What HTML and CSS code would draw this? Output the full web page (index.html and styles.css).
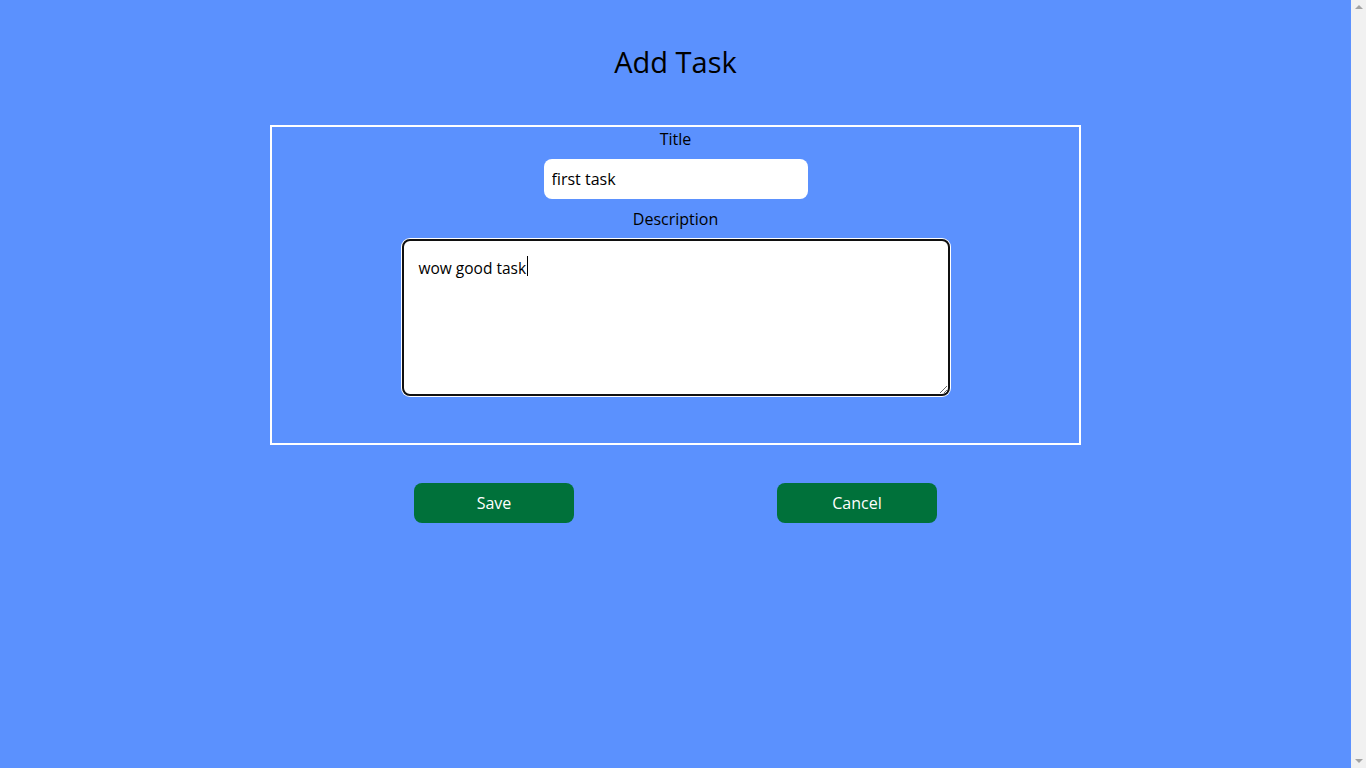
FILE: index.html
```html
<!DOCTYPE html>
<html lang="en">
<head>
<meta charset="utf-8">
<title>Add Task</title>
<link rel="stylesheet" href="styles.css">
</head>
<body>
<main class="page">
  <h1 class="heading">Add Task</h1>
  <form class="task-form">
    <div class="fields">
      <label class="field-label" for="title">Title</label>
      <input class="title-input" id="title" type="text" value="first task">
      <label class="field-label desc-label" for="desc">Description</label>
      <div class="desc-wrap">
        <textarea class="desc-input" id="desc">wow good task</textarea>
        <span class="caret"></span>
      </div>
    </div>
    <div class="actions">
      <button class="btn" type="button">Save</button>
      <button class="btn" type="button">Cancel</button>
    </div>
  </form>
</main>
<div class="scrollbar">
  <span class="arrow arrow-up"></span>
  <span class="arrow arrow-down"></span>
</div>
</body>
</html>
```

FILE: styles.css
```css
html {
  background: #5b91fe;
}
body {
  margin: 0;
  background: #5b91fe;
  font-family: "Open Sans", "Noto Sans", sans-serif;
  color: #000;
  display: flex;
  min-height: 100vh;
}
.page {
  flex: 1;
  display: flex;
  flex-direction: column;
  align-items: center;
}
.scrollbar {
  width: 15px;
  height: 100vh;
  background: #f1f1f1;
  display: flex;
  flex-direction: column;
  justify-content: space-between;
  align-items: center;
  box-sizing: border-box;
  padding: 5px 0 5px;
}
.arrow {
  width: 0;
  height: 0;
  border-left: 4px solid transparent;
  border-right: 4px solid transparent;
}
.arrow-up {
  border-bottom: 4px solid #a3a3a3;
}
.arrow-down {
  border-top: 4px solid #a3a3a3;
}
.heading {
  margin: 43px 0 0;
  font-size: 29px;
  font-weight: 400;
  line-height: 38px;
  height: 38px;
}
.task-form {
  width: 60%;
  display: flex;
  flex-direction: column;
  align-items: center;
  margin-top: 44px;
}
.fields {
  box-sizing: border-box;
  width: 100%;
  height: 320px;
  border: 2px solid #fff;
  display: flex;
  flex-direction: column;
  align-items: center;
}
.field-label {
  font-size: 16px;
  line-height: 24px;
  height: 24px;
}
.title-input {
  margin-top: 8px;
  box-sizing: border-box;
  width: 264px;
  height: 40px;
  border: none;
  border-radius: 8px;
  padding: 0 8px;
  font-family: inherit;
  font-size: 16px;
  color: #000;
  background: #fff;
  outline: none;
}
.desc-label {
  margin-top: 8px;
}
.desc-wrap {
  position: relative;
  margin-top: 8px;
  display: flex;
}
.desc-input {
  box-sizing: border-box;
  width: 548px;
  height: 157px;
  border: 2px solid #101010;
  border-radius: 8px;
  box-shadow: 0 0 0 1px #fff;
  outline: none;
  padding: 15px 15px;
  margin: 0;
  font-family: inherit;
  font-size: 15.5px;
  line-height: 24px;
  color: #000;
  background: #fff;
}
.caret {
  position: absolute;
  left: 125px;
  top: 17px;
  width: 1px;
  height: 20px;
  background: #000;
}
.actions {
  display: flex;
  gap: 203px;
  margin-top: 38px;
}
.btn {
  width: 160px;
  height: 40px;
  border: none;
  border-radius: 8px;
  background: #00713a;
  color: #fff;
  font-family: inherit;
  font-size: 16px;
  padding: 0;
}
```
